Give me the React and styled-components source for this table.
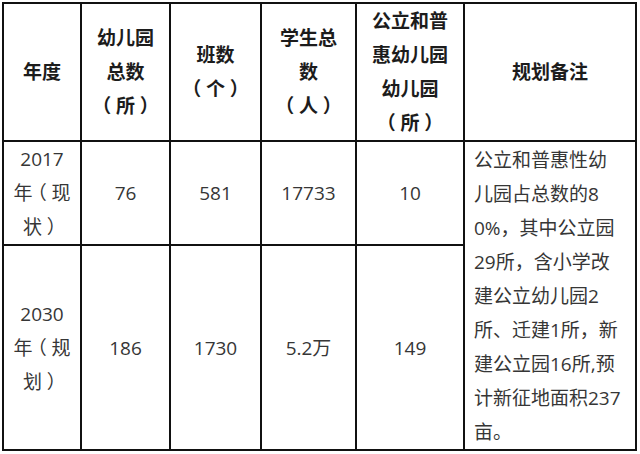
import React from 'react';
import styled, { createGlobalStyle, css } from 'styled-components';

const GlobalStyle = createGlobalStyle`
  html, body {
    margin: 0;
    background: #fff;
  }
`;

const Page = styled.div`
  padding: 2px 0 0 2px;
  font-family: "Open Sans", "Noto Sans CJK SC", sans-serif;
`;

const Table = styled.table`
  border-collapse: separate;
  border-spacing: 0;
  table-layout: fixed;
  width: 635px;
  border-left: 2px solid #111;
  border-top: 2px solid #111;
`;

const Row = styled.tr`
  height: ${(p) => p.$h}px;
`;

const cellBase = css`
  box-sizing: border-box;
  border-right: 2px solid #111;
  border-bottom: 2px solid #111;
  padding: 0;
  text-align: center;
  vertical-align: middle;
  font-size: 19px;
  line-height: 34px;
  white-space: nowrap;
`;

const HeadCell = styled.th`
  ${cellBase}
  font-weight: 700;
  color: #1c1c1c;
`;

const Cell = styled.td`
  ${cellBase}
  font-weight: 400;
  color: #363636;
`;

const NoteCell = styled(Cell)`
  text-align: left;
  vertical-align: top;
  padding: 1px 6px 0 9px;
`;

const Line = styled.div``;

// full-width bracket slot with the glyph centred in it
const Bracket = styled.span`
  display: inline-block;
  width: 1em;
  text-align: center;
  font-feature-settings: "halt";
`;

const columns = [78, 89, 91, 95, 108, 172];

const header = [
  ['年度'],
  ['幼儿园', '总数', '（所）'],
  ['班数', '（个）'],
  ['学生总', '数', '（人）'],
  ['公立和普', '惠幼儿园', '幼儿园', '（所）'],
  ['规划备注'],
];

const rows = [
  { h: 104, year: ['2017', '年（现', '状）'], values: ['76', '581', '17733', '10'] },
  { h: 205, year: ['2030', '年（规', '划）'], values: ['186', '1730', '5.2万', '149'] },
];

const note = [
  '公立和普惠性幼',
  '儿园占总数的8',
  '0%，其中公立园',
  '29所，含小学改',
  '建公立幼儿园2',
  '所、迁建1所，新',
  '建公立园16所,预',
  '计新征地面积237',
  '亩。',
];

const withBrackets = (text) =>
  text.split(/([（）])/).filter(Boolean).map((part, i) =>
    part === '（' || part === '）' ? <Bracket key={i}>{part}</Bracket> : part
  );

const Lines = ({ items }) =>
  items.map((t, i) => <Line key={i}>{withBrackets(t)}</Line>);

export default function App() {
  return (
    <>
      <GlobalStyle />
      <Page lang="zh-CN">
        <Table>
          <colgroup>
            {columns.map((w, i) => (
              <col key={i} style={{ width: w }} />
            ))}
          </colgroup>
          <thead>
            <Row $h={138}>
              {header.map((lines, i) => (
                <HeadCell key={i}>
                  <Lines items={lines} />
                </HeadCell>
              ))}
            </Row>
          </thead>
          <tbody>
            {rows.map((r, i) => (
              <Row key={i} $h={r.h}>
                <Cell>
                  <Lines items={r.year} />
                </Cell>
                {r.values.map((v, j) => (
                  <Cell key={j}>{v}</Cell>
                ))}
                {i === 0 && (
                  <NoteCell rowSpan={2}>
                    <Lines items={note} />
                  </NoteCell>
                )}
              </Row>
            ))}
          </tbody>
        </Table>
      </Page>
    </>
  );
}
